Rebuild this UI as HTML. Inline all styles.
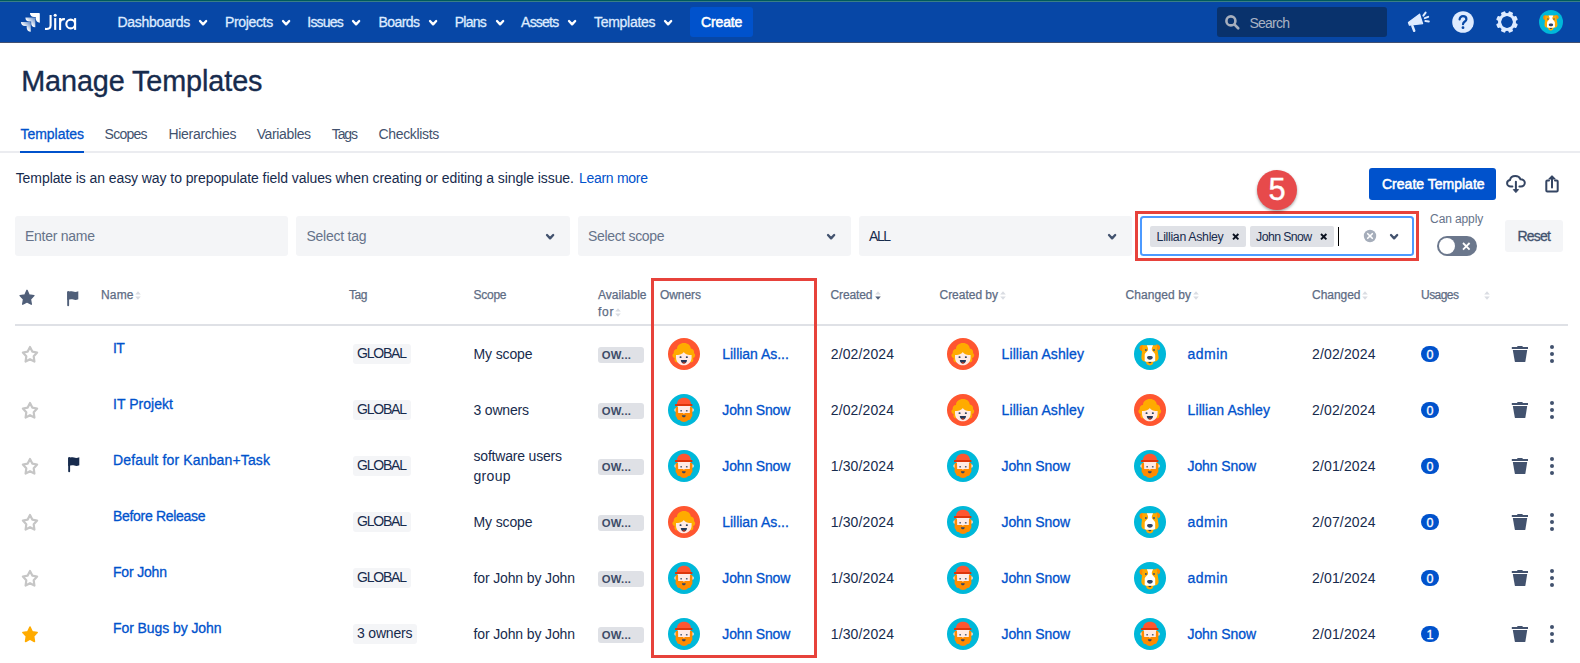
<!DOCTYPE html>
<html><head><meta charset="utf-8"><title>Manage Templates</title>
<style>
html,body{margin:0;padding:0;background:#fff;}
body{width:1580px;height:663px;position:relative;overflow:hidden;font-family:"Liberation Sans",sans-serif;}
.t{position:absolute;white-space:nowrap;line-height:20px;height:20px;}
.b{position:absolute;box-sizing:border-box;}
svg{overflow:visible;}
</style></head><body>
<div class="b" style="left:0px;top:0px;width:1580px;height:42px;background:#0747A6;"></div>
<div class="b" style="left:0px;top:0px;width:1580px;height:1px;background:#005A5E;"></div>
<div class="b" style="left:0px;top:1px;width:1580px;height:1px;background:#3A7F85;"></div>
<div class="b" style="left:0px;top:42px;width:1580px;height:1px;background:#2E3D61;opacity:.9"></div>
<div class="t" style="left:117.50px;top:12.15px;font-size:14px;color:#DEEBFF;letter-spacing:-0.310px;-webkit-text-stroke:0.3px #DEEBFF;">Dashboards</div>
<svg class="b" style="left:199.1px;top:19.8px;" width="8.2" height="5.4" viewBox="0 0 8.2 5.4"><path d="M1 1 L4.1 4.4 L7.2 1" fill="none" stroke="#fff" stroke-width="2.3" stroke-linecap="round" stroke-linejoin="round"/></svg>
<div class="t" style="left:224.90px;top:12.15px;font-size:14px;color:#DEEBFF;letter-spacing:-0.325px;-webkit-text-stroke:0.3px #DEEBFF;">Projects</div>
<svg class="b" style="left:281.9px;top:19.8px;" width="8.2" height="5.4" viewBox="0 0 8.2 5.4"><path d="M1 1 L4.1 4.4 L7.2 1" fill="none" stroke="#fff" stroke-width="2.3" stroke-linecap="round" stroke-linejoin="round"/></svg>
<div class="t" style="left:307.30px;top:12.15px;font-size:14px;color:#DEEBFF;letter-spacing:-0.792px;-webkit-text-stroke:0.3px #DEEBFF;">Issues</div>
<svg class="b" style="left:352.29999999999995px;top:19.8px;" width="8.2" height="5.4" viewBox="0 0 8.2 5.4"><path d="M1 1 L4.1 4.4 L7.2 1" fill="none" stroke="#fff" stroke-width="2.3" stroke-linecap="round" stroke-linejoin="round"/></svg>
<div class="t" style="left:378.40px;top:12.15px;font-size:14px;color:#DEEBFF;letter-spacing:-0.532px;-webkit-text-stroke:0.3px #DEEBFF;">Boards</div>
<svg class="b" style="left:428.9px;top:19.8px;" width="8.2" height="5.4" viewBox="0 0 8.2 5.4"><path d="M1 1 L4.1 4.4 L7.2 1" fill="none" stroke="#fff" stroke-width="2.3" stroke-linecap="round" stroke-linejoin="round"/></svg>
<div class="t" style="left:454.80px;top:12.15px;font-size:14px;color:#DEEBFF;letter-spacing:-0.780px;-webkit-text-stroke:0.3px #DEEBFF;">Plans</div>
<svg class="b" style="left:495.5px;top:19.8px;" width="8.2" height="5.4" viewBox="0 0 8.2 5.4"><path d="M1 1 L4.1 4.4 L7.2 1" fill="none" stroke="#fff" stroke-width="2.3" stroke-linecap="round" stroke-linejoin="round"/></svg>
<div class="t" style="left:521.10px;top:12.15px;font-size:14px;color:#DEEBFF;letter-spacing:-0.783px;-webkit-text-stroke:0.3px #DEEBFF;">Assets</div>
<svg class="b" style="left:568.0px;top:19.8px;" width="8.2" height="5.4" viewBox="0 0 8.2 5.4"><path d="M1 1 L4.1 4.4 L7.2 1" fill="none" stroke="#fff" stroke-width="2.3" stroke-linecap="round" stroke-linejoin="round"/></svg>
<div class="t" style="left:594.00px;top:12.15px;font-size:14px;color:#DEEBFF;letter-spacing:-0.289px;-webkit-text-stroke:0.3px #DEEBFF;">Templates</div>
<svg class="b" style="left:664.4px;top:19.8px;" width="8.2" height="5.4" viewBox="0 0 8.2 5.4"><path d="M1 1 L4.1 4.4 L7.2 1" fill="none" stroke="#fff" stroke-width="2.3" stroke-linecap="round" stroke-linejoin="round"/></svg>
<div class="b" style="left:690px;top:7px;width:63px;height:30px;background:#0052CC;border-radius:3px;"></div>
<div class="t" style="left:701.10px;top:12.15px;font-size:14px;color:#FFFFFF;letter-spacing:-0.164px;-webkit-text-stroke:0.55px #fff;">Create</div>
<svg width="0" height="0" style="position:absolute"><defs>
<linearGradient id="jg" x1="0.95" y1="0.1" x2="0.45" y2="0.62"><stop offset="0.1" stop-color="#fff" stop-opacity="0.45"/><stop offset="1" stop-color="#fff"/></linearGradient>
<symbol id="av-l" viewBox="0 0 32 32"><circle cx="16" cy="16" r="16" fill="#FF5630"/>
<path d="M9 24.3 C6.5 24.5 6 21.5 6.8 20 C4 19.5 3.8 16.3 5.8 15.3 C5.3 12.5 7.5 11 9 11 C9 7.5 12 5 16 5 C20 5 22.6 7.3 22.8 10.6 C25 10.8 26.6 12.8 26 15.2 C27.8 16.2 27.6 19.3 25 20 C25.8 22 25.2 24.4 22.8 24.3 Z" fill="#FFAB00"/>
<path d="M8 17 C10.5 17 14.3 16.5 15.7 13.9 C17 16.4 20.5 17 23.6 17 L23.6 19.5 C23.6 24 20.3 27.3 15.8 27.3 C11.3 27.3 8 24 8 19.5 Z" fill="#FFEBE6"/>
<rect x="11.6" y="18.2" width="1.9" height="1.9" rx=".6" fill="#344563"/><rect x="17.9" y="18.2" width="1.9" height="1.9" rx=".6" fill="#344563"/>
<path d="M12.8 22 H19 C19 24.2 17.6 25.6 15.9 25.6 C14.2 25.6 12.8 24.2 12.8 22 Z" fill="#253858"/>
<path d="M14.3 24.9 C14.8 24 17 24 17.5 24.9 C17 25.4 16.5 25.6 15.9 25.6 C15.3 25.6 14.8 25.4 14.3 24.9 Z" fill="#DE350B"/></symbol>
<symbol id="av-j" viewBox="0 0 32 32"><circle cx="16" cy="16" r="16" fill="#00B8D9"/>
<ellipse cx="7.6" cy="16" rx="1.2" ry="1.7" fill="#FFEBE6"/><ellipse cx="24.6" cy="16" rx="1.2" ry="1.7" fill="#FFEBE6"/>
<rect x="9.4" y="11" width="13.2" height="9" fill="#FFEBE6"/>
<path d="M7.7 13.2 L10 12.6 L10.2 18.9 L14.8 18.9 L15.9 19.8 L17 18.9 L21.8 18.9 L22 12.6 L24.3 13.2 C24.5 15 24.6 17.5 24.3 19.6 C24.8 21.6 24 22.8 23.2 23.4 C23 25.2 21.6 26 20.2 26 C19.4 27.4 17.4 27.7 16 28.1 C14.5 27.7 12.6 27.4 11.8 26 C10.4 26 9 25.2 8.8 23.4 C8 22.8 7.2 21.6 7.7 19.6 C7.4 17.5 7.5 15 7.7 13.2 Z" fill="#FF8B00"/>
<path d="M8.9 10.3 C8.9 6.3 12 3.7 16 3.7 C20 3.7 23 6.3 23 10.3 Z" fill="#FF5630"/>
<rect x="7" y="10.1" width="17.4" height="1.8" rx=".5" fill="#DE350B"/>
<rect x="12.3" y="15.9" width="1.7" height="1.7" rx=".5" fill="#505F79"/><rect x="17.9" y="15.9" width="1.7" height="1.7" rx=".5" fill="#505F79"/>
<path d="M13.9 21.2 H17.7 C17.7 22.6 16.9 23.3 15.8 23.3 C14.7 23.3 13.9 22.6 13.9 21.2 Z" fill="#344563"/></symbol>
<symbol id="av-d" viewBox="0 0 32 32"><circle cx="16" cy="16" r="16" fill="#00B8D9"/>
<path d="M9.5 7.3 C7 6.5 5.2 8 5.6 10.5 C5.8 12 6.8 13 8.3 13.3 Z" fill="#FF8B00"/>
<path d="M21.8 6.8 C24 5.9 26.3 7.3 26.2 9.8 C26.1 11.2 25.2 12 24 12.2 Z" fill="#FF8B00"/>
<path d="M8.6 7.2 H22.8 L24.6 19 C24.8 21 24 22.5 22.3 23.2 L19.4 23.8 C19.4 26 18 27.4 15.8 27.4 C13.6 27.4 12 26 12 23.8 L9.5 23.2 C8 22.6 7.2 21 7.4 19 Z" fill="#FFAB00"/>
<path d="M12.8 7.2 H19.1 C18.6 8.8 17.7 9.8 17.8 11.4 C18 13.6 21.2 14.4 21.2 17 V23 L19 23.8 H12.3 L10.7 23 V17 C10.7 14.4 13.9 13.6 14.1 11.4 C14.2 9.8 13.3 8.8 12.8 7.2 Z" fill="#fff"/>
<rect x="11" y="11" width="1.8" height="1.9" rx=".7" fill="#42526E"/><rect x="19.1" y="11" width="1.8" height="1.9" rx=".7" fill="#42526E"/>
<path d="M13 19.6 C13 18.4 14.4 18.1 15.9 18.1 C17.4 18.1 18.8 18.4 18.8 19.6 C18.8 20.8 17.4 21.8 15.9 21.8 C14.4 21.8 13 20.8 13 19.6 Z" fill="#344563"/>
<path d="M14.4 23.9 H17.3 C17.3 24.8 16.7 25.2 15.85 25.2 C15 25.2 14.4 24.8 14.4 23.9 Z" fill="#344563"/></symbol>
</defs></svg>
<svg class="b" style="left:19.2px;top:11.1px;" width="22.7" height="22.7" viewBox="0 0 24 24"><path d="M11.53 2c0 2.4 1.97 4.35 4.35 4.35h1.78v1.7c0 2.4 1.94 4.34 4.34 4.35V2.84a.84.84 0 0 0-.84-.84h-9.63z" fill="#fff"/>
<path d="M6.77 6.8a4.36 4.36 0 0 0 4.34 4.34h1.8v1.72a4.36 4.36 0 0 0 4.34 4.34V7.63a.84.84 0 0 0-.83-.83H6.77z" fill="url(#jg)"/>
<path d="M2 11.6c0 2.4 1.95 4.34 4.35 4.34h1.78v1.72c.01 2.39 1.95 4.34 4.34 4.34v-9.57a.84.84 0 0 0-.84-.84H2z" fill="url(#jg)"/></svg>
<svg class="b" style="left:42px;top:10px;" width="40" height="24" viewBox="0 0 40 24"><g fill="none" stroke="#fff" stroke-width="2.1" stroke-linejoin="round">
<path d="M8.6 4.9 V15.6 C8.6 18.4 6.6 19.3 3 18.9"/>
<path d="M13.2 8.1 V19.9"/>
<path d="M18.1 8.1 V19.9 M18.1 13.5 C18.1 10.4 20 8.9 22.9 9.2"/>
<circle cx="28.7" cy="14" r="4.4"/><path d="M33.1 8.1 V19.9"/></g>
<circle cx="13.2" cy="5.3" r="1.55" fill="#fff"/></svg>
<div class="b" style="left:1217px;top:7px;width:170px;height:30px;background:#09326C;border-radius:3px;"></div>
<svg class="b" style="left:1223px;top:13px;" width="18" height="18" viewBox="0 0 18 18"><circle cx="7.9" cy="7.9" r="4.5" fill="none" stroke="#A7AFBD" stroke-width="2.6"/><path d="M11.6 11.6 L15.2 15.2" stroke="#A7AFBD" stroke-width="2.7" stroke-linecap="round"/></svg>
<div class="t" style="left:1249.40px;top:12.75px;font-size:14px;color:#A9B2C3;letter-spacing:-0.732px;">Search</div>
<svg class="b" style="left:1406px;top:10px;" width="26" height="24" viewBox="0 0 26 24"><path d="M2.4 12.4 L13.6 4.2 L16.6 13.6 L3.4 15.2 Z" fill="#DEEBFF" stroke="#DEEBFF" stroke-width="1.2" stroke-linejoin="round"/>
<path d="M6.4 16 L8.2 20.8" stroke="#DEEBFF" stroke-width="2.5" stroke-linecap="round"/>
<path d="M17.4 5.6 L19.6 2.6 M18.8 8.2 L22.2 6.8 M19.4 11 L22.8 11.4" stroke="#DEEBFF" stroke-width="2" stroke-linecap="round"/></svg>
<svg class="b" style="left:1452px;top:10.6px;" width="22" height="22" viewBox="0 0 22 22"><circle cx="11" cy="11" r="10.8" fill="#DEEBFF"/>
<path d="M7.6 8.4 C7.6 6.4 9.2 5.2 11 5.2 C12.8 5.2 14.4 6.4 14.4 8.2 C14.4 10.6 11 10.4 11 13.2" fill="none" stroke="#0747A6" stroke-width="2.2" stroke-linecap="round"/><circle cx="11" cy="16.7" r="1.4" fill="#0747A6"/></svg>
<svg class="b" style="left:1495.8px;top:10.6px;" width="22" height="22" viewBox="0 0 22 22"><g transform="translate(11,11)"><rect x="-2.3" y="-10.9" width="4.6" height="5" rx="1" transform="rotate(22.5)" fill="#DEEBFF"/><rect x="-2.3" y="-10.9" width="4.6" height="5" rx="1" transform="rotate(67.5)" fill="#DEEBFF"/><rect x="-2.3" y="-10.9" width="4.6" height="5" rx="1" transform="rotate(112.5)" fill="#DEEBFF"/><rect x="-2.3" y="-10.9" width="4.6" height="5" rx="1" transform="rotate(157.5)" fill="#DEEBFF"/><rect x="-2.3" y="-10.9" width="4.6" height="5" rx="1" transform="rotate(202.5)" fill="#DEEBFF"/><rect x="-2.3" y="-10.9" width="4.6" height="5" rx="1" transform="rotate(247.5)" fill="#DEEBFF"/><rect x="-2.3" y="-10.9" width="4.6" height="5" rx="1" transform="rotate(292.5)" fill="#DEEBFF"/><rect x="-2.3" y="-10.9" width="4.6" height="5" rx="1" transform="rotate(337.5)" fill="#DEEBFF"/><circle r="7.45" fill="none" stroke="#DEEBFF" stroke-width="3.1"/></g></svg>
<svg class="b" style="left:1539px;top:9.600000000000001px" width="24" height="24"><use href="#av-d"/></svg>
<div class="t" style="left:21.20px;top:70.62px;font-size:28.8px;color:#172B4D;letter-spacing:-0.102px;line-height:36px;height:36px;margin-top:-8px;-webkit-text-stroke:0.35px #172B4D;">Manage Templates</div>
<div class="b" style="left:0px;top:151px;width:1580px;height:2px;background:#EBECF0;"></div>
<div class="b" style="left:20px;top:151px;width:64px;height:2px;background:#0052CC;"></div>
<div class="t" style="left:20.50px;top:124.35px;font-size:14px;color:#0052CC;letter-spacing:-0.039px;-webkit-text-stroke:0.3px currentColor;">Templates</div>
<div class="t" style="left:104.60px;top:124.35px;font-size:14px;color:#42526E;letter-spacing:-0.740px;">Scopes</div>
<div class="t" style="left:168.40px;top:124.35px;font-size:14px;color:#42526E;letter-spacing:-0.280px;">Hierarchies</div>
<div class="t" style="left:256.70px;top:124.35px;font-size:14px;color:#42526E;letter-spacing:-0.366px;">Variables</div>
<div class="t" style="left:331.80px;top:124.35px;font-size:14px;color:#42526E;letter-spacing:-1.124px;">Tags</div>
<div class="t" style="left:378.60px;top:124.35px;font-size:14px;color:#42526E;letter-spacing:-0.355px;">Checklists</div>
<div class="t" style="left:15.70px;top:168.35px;font-size:14px;color:#172B4D;letter-spacing:-0.074px;">Template is an easy way to prepopulate field values when creating or editing a single issue.</div>
<div class="t" style="left:579.00px;top:168.35px;font-size:14px;color:#0052CC;letter-spacing:-0.288px;">Learn more</div>
<div class="b" style="left:1369px;top:168px;width:127px;height:32px;background:#0052CC;border-radius:3px;"></div>
<div class="t" style="left:1382.00px;top:174.15px;font-size:14px;color:#fff;letter-spacing:0.010px;-webkit-text-stroke:0.55px #fff;">Create Template</div>
<svg class="b" style="left:1505px;top:173px;" width="22" height="22" viewBox="0 0 22 22"><path d="M7.4 13.4 H5.8 C3.7 13.4 2.1 12 2.1 10.2 C2.1 8.6 3.3 7.3 5 7 C5.4 4.6 7.6 3.1 10.3 3.1 C12.7 3.1 14.6 4.3 15.4 6.2 C17.9 6.2 19.8 7.7 19.8 9.8 C19.8 11.9 18.1 13.4 15.9 13.4 H14.4" fill="none" stroke="#344563" stroke-width="2" stroke-linecap="round"/>
<path d="M10.9 8.8 V17.6" fill="none" stroke="#344563" stroke-width="2" stroke-linecap="round"/><path d="M8.3 16.6 H13.5 L10.9 19.6 Z" fill="#344563" stroke="#344563" stroke-width="1" stroke-linejoin="round"/></svg>
<svg class="b" style="left:1542px;top:173px;" width="20" height="22" viewBox="0 0 20 22"><path d="M7 7.4 H5.3 C4.7 7.4 4.3 7.8 4.3 8.4 V17.6 C4.3 18.2 4.7 18.6 5.3 18.6 H14.7 C15.3 18.6 15.7 18.2 15.7 17.6 V8.4 C15.7 7.8 15.3 7.4 14.7 7.4 H13" fill="none" stroke="#344563" stroke-width="2" stroke-linecap="round"/>
<path d="M10 14.6 V4" fill="none" stroke="#344563" stroke-width="2" stroke-linecap="round"/><path d="M7 6 L10 2.9 L13 6 Z" fill="#344563" stroke="#344563" stroke-width="1.2" stroke-linejoin="round"/></svg>
<div class="b" style="left:15px;top:216px;width:273px;height:40px;background:#F4F5F7;border-radius:3px;"></div>
<div class="t" style="left:25.00px;top:226.15px;font-size:14px;color:#66738A;letter-spacing:-0.264px;">Enter name</div>
<div class="b" style="left:296px;top:216px;width:274px;height:40px;background:#F4F5F7;border-radius:3px;"></div>
<div class="t" style="left:306.50px;top:226.15px;font-size:14px;color:#66738A;letter-spacing:-0.251px;">Select tag</div>
<svg class="b" style="left:545.9px;top:233.70000000000002px;" width="8.2" height="5.4" viewBox="0 0 8.2 5.4"><path d="M1 1 L4.1 4.4 L7.2 1" fill="none" stroke="#42526E" stroke-width="2.3" stroke-linecap="round" stroke-linejoin="round"/></svg>
<div class="b" style="left:578px;top:216px;width:273px;height:40px;background:#F4F5F7;border-radius:3px;"></div>
<div class="t" style="left:588.00px;top:226.15px;font-size:14px;color:#66738A;letter-spacing:-0.333px;">Select scope</div>
<svg class="b" style="left:826.9px;top:233.70000000000002px;" width="8.2" height="5.4" viewBox="0 0 8.2 5.4"><path d="M1 1 L4.1 4.4 L7.2 1" fill="none" stroke="#42526E" stroke-width="2.3" stroke-linecap="round" stroke-linejoin="round"/></svg>
<div class="b" style="left:859px;top:216px;width:273px;height:40px;background:#F4F5F7;border-radius:3px;"></div>
<div class="t" style="left:869.00px;top:226.15px;font-size:14px;color:#172B4D;letter-spacing:-1.456px;">ALL</div>
<svg class="b" style="left:1107.9px;top:233.70000000000002px;" width="8.2" height="5.4" viewBox="0 0 8.2 5.4"><path d="M1 1 L4.1 4.4 L7.2 1" fill="none" stroke="#42526E" stroke-width="2.3" stroke-linecap="round" stroke-linejoin="round"/></svg>
<div class="b" style="left:1135px;top:211px;width:284px;height:50px;background:transparent;border:3px solid #E7423B;"></div>
<div class="b" style="left:1140px;top:216px;width:274px;height:40px;background:#fff;border:2px solid #4C9AFF;border-radius:3.5px;"></div>
<div class="b" style="left:1150px;top:226px;width:95.7px;height:20.6px;background:#DFE1E6;border-radius:2px;"></div>
<div class="t" style="left:1156.60px;top:226.74px;font-size:12.3px;color:#172B4D;letter-spacing:-0.301px;">Lillian Ashley</div>
<svg class="b" style="left:1232.2px;top:232.60000000000002px;" width="7.4" height="7.4" viewBox="0 0 7.4 7.4"><path d="M1 1 L6.4 6.4 M6.4 1 L1 6.4" stroke="#0B1220" stroke-width="1.9" stroke-linecap="butt"/></svg>
<div class="b" style="left:1250px;top:226px;width:83.8px;height:20.6px;background:#DFE1E6;border-radius:2px;"></div>
<div class="t" style="left:1256.10px;top:226.74px;font-size:12.3px;color:#172B4D;letter-spacing:-0.595px;">John Snow</div>
<svg class="b" style="left:1320.1px;top:232.60000000000002px;" width="7.4" height="7.4" viewBox="0 0 7.4 7.4"><path d="M1 1 L6.4 6.4 M6.4 1 L1 6.4" stroke="#0B1220" stroke-width="1.9" stroke-linecap="butt"/></svg>
<div class="b" style="left:1338px;top:227.2px;width:1px;height:18.6px;background:#000;"></div>
<svg class="b" style="left:1362.5px;top:229.3px;" width="14" height="14" viewBox="0 0 14 14"><circle cx="7" cy="7" r="6.2" fill="#A5ADBA"/><path d="M4.7 4.7 L9.3 9.3 M9.3 4.7 L4.7 9.3" stroke="#fff" stroke-width="1.6" stroke-linecap="round"/></svg>
<svg class="b" style="left:1389.9px;top:233.70000000000002px;" width="8.2" height="5.4" viewBox="0 0 8.2 5.4"><path d="M1 1 L4.1 4.4 L7.2 1" fill="none" stroke="#42526E" stroke-width="2.3" stroke-linecap="round" stroke-linejoin="round"/></svg>
<div class="t" style="left:1430.10px;top:208.64px;font-size:12px;color:#66738A;letter-spacing:-0.117px;">Can apply</div>
<div class="b" style="left:1437px;top:236px;width:40px;height:20px;background:#6B778C;border-radius:10px;"></div>
<div class="b" style="left:1439px;top:238px;width:16px;height:16px;background:#fff;border-radius:8px;"></div>
<svg class="b" style="left:1461.7px;top:241.7px;" width="8.6" height="8.6" viewBox="0 0 8.6 8.6"><path d="M1 1 L7.6 7.6 M7.6 1 L1 7.6" stroke="#fff" stroke-width="1.8" stroke-linecap="butt"/></svg>
<div class="b" style="left:1505px;top:220px;width:58px;height:32px;background:#F4F5F7;border-radius:3px;"></div>
<div class="t" style="left:1517.50px;top:226.45px;font-size:14px;color:#42526E;letter-spacing:-0.768px;-webkit-text-stroke:0.3px currentColor;">Reset</div>
<div class="b" style="left:1257px;top:170px;width:40px;height:40px;background:#E74A4B;border-radius:20px;box-shadow:0 1.5px 3px rgba(0,0,0,.35);"></div>
<div class="t" style="left:1268.40px;top:180.32px;font-size:30.8px;color:#fff;letter-spacing:0.000px;line-height:36px;height:36px;margin-top:-8px;-webkit-text-stroke:0.4px #fff;">5</div>
<svg class="b" style="left:17px;top:288.3px;" width="20" height="20" viewBox="0 0 20 20"><path d="M0.00 -7.67 L2.12 -3.06 L6.94 -2.37 L3.42 1.17 L4.29 6.20 L0.00 3.78 L-4.29 6.20 L-3.42 1.17 L-6.94 -2.37 L-2.12 -3.06 Z" transform="translate(10,10)" fill="#505F79" stroke="#505F79" stroke-width="1.4" stroke-linejoin="round"/></svg>
<svg class="b" style="left:67.3px;top:291px;" width="13" height="15" viewBox="0 0 13 15"><path d="M1.15 0.9 V14.3" stroke="#505F79" stroke-width="1.9" stroke-linecap="round"/><path d="M0.2 0.9 C2.5 -0.1 4.5 0.2 6 0.6 C8 1.1 9.6 0.9 11.3 0.3 V8.3 C9.6 9 8 9.1 6.4 8.6 C4.8 8.1 3 8.1 0.2 8.9 Z" fill="#505F79"/></svg>
<div class="t" style="left:101.00px;top:284.84px;font-size:12px;color:#5E6C84;letter-spacing:0.163px;-webkit-text-stroke:0.25px #5E6C84;">Name</div>
<svg class="b" style="left:134.9px;top:291.3px;" width="6" height="9" viewBox="0 0 6 9"><path d="M3 0.2 L5.8 3.5 H0.2 Z" fill="#D9DCE2"/><path d="M3 8.8 L5.8 5.5 H0.2 Z" fill="#D9DCE2"/></svg>
<div class="t" style="left:349.00px;top:284.84px;font-size:12px;color:#5E6C84;letter-spacing:-0.424px;-webkit-text-stroke:0.25px #5E6C84;">Tag</div>
<div class="t" style="left:473.50px;top:284.84px;font-size:12px;color:#5E6C84;letter-spacing:-0.257px;-webkit-text-stroke:0.25px #5E6C84;">Scope</div>
<div class="t" style="left:598.00px;top:284.84px;font-size:12px;color:#5E6C84;letter-spacing:0.002px;-webkit-text-stroke:0.25px #5E6C84;">Available</div>
<div class="t" style="left:660.00px;top:284.84px;font-size:12px;color:#5E6C84;letter-spacing:-0.069px;-webkit-text-stroke:0.25px #5E6C84;">Owners</div>
<div class="t" style="left:830.50px;top:284.84px;font-size:12px;color:#5E6C84;letter-spacing:-0.115px;-webkit-text-stroke:0.25px #5E6C84;">Created</div>
<svg class="b" style="left:875px;top:291.0px;" width="6" height="9" viewBox="0 0 6 9"><path d="M3 0.2 L5.8 3.5 H0.2 Z" fill="#DADDE3"/><path d="M3 8.8 L5.8 5.5 H0.2 Z" fill="#505F79"/></svg>
<div class="t" style="left:939.50px;top:284.84px;font-size:12px;color:#5E6C84;letter-spacing:-0.022px;-webkit-text-stroke:0.25px #5E6C84;">Created by</div>
<svg class="b" style="left:1000px;top:291.3px;" width="6" height="9" viewBox="0 0 6 9"><path d="M3 0.2 L5.8 3.5 H0.2 Z" fill="#D9DCE2"/><path d="M3 8.8 L5.8 5.5 H0.2 Z" fill="#D9DCE2"/></svg>
<div class="t" style="left:1125.50px;top:284.84px;font-size:12px;color:#5E6C84;letter-spacing:0.087px;-webkit-text-stroke:0.25px #5E6C84;">Changed by</div>
<svg class="b" style="left:1193px;top:291.3px;" width="6" height="9" viewBox="0 0 6 9"><path d="M3 0.2 L5.8 3.5 H0.2 Z" fill="#D9DCE2"/><path d="M3 8.8 L5.8 5.5 H0.2 Z" fill="#D9DCE2"/></svg>
<div class="t" style="left:1312.00px;top:284.84px;font-size:12px;color:#5E6C84;letter-spacing:-0.035px;-webkit-text-stroke:0.25px #5E6C84;">Changed</div>
<svg class="b" style="left:1362px;top:291.3px;" width="6" height="9" viewBox="0 0 6 9"><path d="M3 0.2 L5.8 3.5 H0.2 Z" fill="#D9DCE2"/><path d="M3 8.8 L5.8 5.5 H0.2 Z" fill="#D9DCE2"/></svg>
<div class="t" style="left:1421.00px;top:284.84px;font-size:12px;color:#5E6C84;letter-spacing:-0.538px;-webkit-text-stroke:0.25px #5E6C84;">Usages</div>
<svg class="b" style="left:1484px;top:291.3px;" width="6" height="9" viewBox="0 0 6 9"><path d="M3 0.2 L5.8 3.5 H0.2 Z" fill="#D9DCE2"/><path d="M3 8.8 L5.8 5.5 H0.2 Z" fill="#D9DCE2"/></svg>
<div class="t" style="left:598.00px;top:302.34px;font-size:12px;color:#5E6C84;letter-spacing:0.748px;-webkit-text-stroke:0.25px #5E6C84;">for</div>
<svg class="b" style="left:615px;top:307.5px;" width="6" height="9" viewBox="0 0 6 9"><path d="M3 0.2 L5.8 3.5 H0.2 Z" fill="#D9DCE2"/><path d="M3 8.8 L5.8 5.5 H0.2 Z" fill="#D9DCE2"/></svg>
<div class="b" style="left:15px;top:324px;width:1553px;height:2px;background:#DFE1E6;"></div>
<svg class="b" style="left:19.9px;top:345.1px;" width="20" height="20" viewBox="0 0 20 20"><path d="M0.00 -8.10 L2.29 -3.41 L7.13 -2.50 L3.71 1.30 L4.41 6.55 L0.00 4.21 L-4.41 6.55 L-3.71 1.30 L-7.13 -2.50 L-2.29 -3.41 Z" transform="translate(10,10)" fill="none" stroke="#C6C6C6" stroke-width="2.2" stroke-linejoin="round"/></svg>
<div class="t" style="left:113.00px;top:338.15px;font-size:14px;color:#0052CC;letter-spacing:-0.641px;-webkit-text-stroke:0.3px #0052CC;">IT</div>
<div class="b" style="left:353px;top:344px;width:58px;height:20px;background:#F4F5F7;border-radius:3px;"></div>
<div class="t" style="left:357.00px;top:343.15px;font-size:14px;color:#172B4D;letter-spacing:-1.206px;">GLOBAL</div>
<div class="t" style="left:473.50px;top:344.15px;font-size:14px;color:#172B4D;letter-spacing:-0.130px;">My scope</div>
<div class="b" style="left:598px;top:347px;width:46px;height:16px;background:#DFE1E6;border-radius:3px;"></div>
<div class="t" style="left:601.80px;top:345.08px;font-size:11.3px;color:#3D4C68;letter-spacing:0.238px;font-weight:700;">OW...</div>
<svg class="b" style="left:668px;top:338px" width="32" height="32"><use href="#av-l"/></svg>
<div class="t" style="left:722.30px;top:344.15px;font-size:14px;color:#0052CC;letter-spacing:-0.035px;-webkit-text-stroke:0.3px #0052CC;">Lillian As...</div>
<div class="t" style="left:830.80px;top:344.15px;font-size:14px;color:#172B4D;letter-spacing:0.115px;">2/02/2024</div>
<svg class="b" style="left:947px;top:338px" width="32" height="32"><use href="#av-l"/></svg>
<div class="t" style="left:1001.50px;top:344.15px;font-size:14px;color:#0052CC;letter-spacing:0.120px;-webkit-text-stroke:0.3px #0052CC;">Lillian Ashley</div>
<svg class="b" style="left:1134px;top:338px" width="32" height="32"><use href="#av-d"/></svg>
<div class="t" style="left:1187.50px;top:344.15px;font-size:14px;color:#0052CC;letter-spacing:0.467px;-webkit-text-stroke:0.3px #0052CC;">admin</div>
<div class="t" style="left:1312.00px;top:344.15px;font-size:14px;color:#172B4D;letter-spacing:0.152px;">2/02/2024</div>
<div class="b" style="left:1421px;top:346px;width:18px;height:16px;background:#0052CC;border-radius:8px;"></div>
<div class="t" style="left:1426.50px;top:344.67px;font-size:12.5px;color:#fff;letter-spacing:0.000px;-webkit-text-stroke:0.3px #fff;">0</div>
<svg class="b" style="left:1511px;top:344px;" width="18" height="19" viewBox="0 0 18 19"><path d="M0.8 3 H17 V4.9 H0.8 Z M6.3 1.9 H11.6 V3 H6.3 Z" fill="#42526E"/><path d="M1.8 6 H16.2 L14.4 17.4 C14.3 17.8 14 18 13.6 18 H4.6 C4.2 18 3.9 17.8 3.8 17.4 Z" fill="#42526E"/></svg>
<div class="b" style="left:1550px;top:345px;width:4px;height:4px;background:#42526E;border-radius:2px;"></div>
<div class="b" style="left:1550px;top:352px;width:4px;height:4px;background:#42526E;border-radius:2px;"></div>
<div class="b" style="left:1550px;top:359px;width:4px;height:4px;background:#42526E;border-radius:2px;"></div>
<svg class="b" style="left:19.9px;top:401.1px;" width="20" height="20" viewBox="0 0 20 20"><path d="M0.00 -8.10 L2.29 -3.41 L7.13 -2.50 L3.71 1.30 L4.41 6.55 L0.00 4.21 L-4.41 6.55 L-3.71 1.30 L-7.13 -2.50 L-2.29 -3.41 Z" transform="translate(10,10)" fill="none" stroke="#C6C6C6" stroke-width="2.2" stroke-linejoin="round"/></svg>
<div class="t" style="left:113.00px;top:394.15px;font-size:14px;color:#0052CC;letter-spacing:0.039px;-webkit-text-stroke:0.3px #0052CC;">IT Projekt</div>
<div class="b" style="left:353px;top:400px;width:58px;height:20px;background:#F4F5F7;border-radius:3px;"></div>
<div class="t" style="left:357.00px;top:399.15px;font-size:14px;color:#172B4D;letter-spacing:-1.206px;">GLOBAL</div>
<div class="t" style="left:473.50px;top:400.15px;font-size:14px;color:#172B4D;letter-spacing:-0.187px;">3 owners</div>
<div class="b" style="left:598px;top:403px;width:46px;height:16px;background:#DFE1E6;border-radius:3px;"></div>
<div class="t" style="left:601.80px;top:401.08px;font-size:11.3px;color:#3D4C68;letter-spacing:0.238px;font-weight:700;">OW...</div>
<svg class="b" style="left:668px;top:394px" width="32" height="32"><use href="#av-j"/></svg>
<div class="t" style="left:722.30px;top:400.15px;font-size:14px;color:#0052CC;letter-spacing:-0.159px;-webkit-text-stroke:0.3px #0052CC;">John Snow</div>
<div class="t" style="left:830.80px;top:400.15px;font-size:14px;color:#172B4D;letter-spacing:0.115px;">2/02/2024</div>
<svg class="b" style="left:947px;top:394px" width="32" height="32"><use href="#av-l"/></svg>
<div class="t" style="left:1001.50px;top:400.15px;font-size:14px;color:#0052CC;letter-spacing:0.120px;-webkit-text-stroke:0.3px #0052CC;">Lillian Ashley</div>
<svg class="b" style="left:1134px;top:394px" width="32" height="32"><use href="#av-l"/></svg>
<div class="t" style="left:1187.50px;top:400.15px;font-size:14px;color:#0052CC;letter-spacing:0.120px;-webkit-text-stroke:0.3px #0052CC;">Lillian Ashley</div>
<div class="t" style="left:1312.00px;top:400.15px;font-size:14px;color:#172B4D;letter-spacing:0.152px;">2/02/2024</div>
<div class="b" style="left:1421px;top:402px;width:18px;height:16px;background:#0052CC;border-radius:8px;"></div>
<div class="t" style="left:1426.50px;top:400.67px;font-size:12.5px;color:#fff;letter-spacing:0.000px;-webkit-text-stroke:0.3px #fff;">0</div>
<svg class="b" style="left:1511px;top:400px;" width="18" height="19" viewBox="0 0 18 19"><path d="M0.8 3 H17 V4.9 H0.8 Z M6.3 1.9 H11.6 V3 H6.3 Z" fill="#42526E"/><path d="M1.8 6 H16.2 L14.4 17.4 C14.3 17.8 14 18 13.6 18 H4.6 C4.2 18 3.9 17.8 3.8 17.4 Z" fill="#42526E"/></svg>
<div class="b" style="left:1550px;top:401px;width:4px;height:4px;background:#42526E;border-radius:2px;"></div>
<div class="b" style="left:1550px;top:408px;width:4px;height:4px;background:#42526E;border-radius:2px;"></div>
<div class="b" style="left:1550px;top:415px;width:4px;height:4px;background:#42526E;border-radius:2px;"></div>
<svg class="b" style="left:19.9px;top:457.1px;" width="20" height="20" viewBox="0 0 20 20"><path d="M0.00 -8.10 L2.29 -3.41 L7.13 -2.50 L3.71 1.30 L4.41 6.55 L0.00 4.21 L-4.41 6.55 L-3.71 1.30 L-7.13 -2.50 L-2.29 -3.41 Z" transform="translate(10,10)" fill="none" stroke="#C6C6C6" stroke-width="2.2" stroke-linejoin="round"/></svg>
<svg class="b" style="left:67.6px;top:457.4px;" width="13" height="15" viewBox="0 0 13 15"><path d="M1.15 0.9 V14.3" stroke="#172B4D" stroke-width="1.9" stroke-linecap="round"/><path d="M0.2 0.9 C2.5 -0.1 4.5 0.2 6 0.6 C8 1.1 9.6 0.9 11.3 0.3 V8.3 C9.6 9 8 9.1 6.4 8.6 C4.8 8.1 3 8.1 0.2 8.9 Z" fill="#172B4D"/></svg>
<div class="t" style="left:113.00px;top:450.15px;font-size:14px;color:#0052CC;letter-spacing:0.150px;-webkit-text-stroke:0.3px #0052CC;">Default for Kanban+Task</div>
<div class="b" style="left:353px;top:456px;width:58px;height:20px;background:#F4F5F7;border-radius:3px;"></div>
<div class="t" style="left:357.00px;top:455.15px;font-size:14px;color:#172B4D;letter-spacing:-1.206px;">GLOBAL</div>
<div class="t" style="left:473.50px;top:446.15px;font-size:14px;color:#172B4D;letter-spacing:-0.195px;">software users</div>
<div class="t" style="left:473.50px;top:466.15px;font-size:14px;color:#172B4D;letter-spacing:0.298px;">group</div>
<div class="b" style="left:598px;top:459px;width:46px;height:16px;background:#DFE1E6;border-radius:3px;"></div>
<div class="t" style="left:601.80px;top:457.08px;font-size:11.3px;color:#3D4C68;letter-spacing:0.238px;font-weight:700;">OW...</div>
<svg class="b" style="left:668px;top:450px" width="32" height="32"><use href="#av-j"/></svg>
<div class="t" style="left:722.30px;top:456.15px;font-size:14px;color:#0052CC;letter-spacing:-0.159px;-webkit-text-stroke:0.3px #0052CC;">John Snow</div>
<div class="t" style="left:830.80px;top:456.15px;font-size:14px;color:#172B4D;letter-spacing:0.115px;">1/30/2024</div>
<svg class="b" style="left:947px;top:450px" width="32" height="32"><use href="#av-j"/></svg>
<div class="t" style="left:1001.50px;top:456.15px;font-size:14px;color:#0052CC;letter-spacing:-0.096px;-webkit-text-stroke:0.3px #0052CC;">John Snow</div>
<svg class="b" style="left:1134px;top:450px" width="32" height="32"><use href="#av-j"/></svg>
<div class="t" style="left:1187.50px;top:456.15px;font-size:14px;color:#0052CC;letter-spacing:-0.096px;-webkit-text-stroke:0.3px #0052CC;">John Snow</div>
<div class="t" style="left:1312.00px;top:456.15px;font-size:14px;color:#172B4D;letter-spacing:0.152px;">2/01/2024</div>
<div class="b" style="left:1421px;top:458px;width:18px;height:16px;background:#0052CC;border-radius:8px;"></div>
<div class="t" style="left:1426.50px;top:456.67px;font-size:12.5px;color:#fff;letter-spacing:0.000px;-webkit-text-stroke:0.3px #fff;">0</div>
<svg class="b" style="left:1511px;top:456px;" width="18" height="19" viewBox="0 0 18 19"><path d="M0.8 3 H17 V4.9 H0.8 Z M6.3 1.9 H11.6 V3 H6.3 Z" fill="#42526E"/><path d="M1.8 6 H16.2 L14.4 17.4 C14.3 17.8 14 18 13.6 18 H4.6 C4.2 18 3.9 17.8 3.8 17.4 Z" fill="#42526E"/></svg>
<div class="b" style="left:1550px;top:457px;width:4px;height:4px;background:#42526E;border-radius:2px;"></div>
<div class="b" style="left:1550px;top:464px;width:4px;height:4px;background:#42526E;border-radius:2px;"></div>
<div class="b" style="left:1550px;top:471px;width:4px;height:4px;background:#42526E;border-radius:2px;"></div>
<svg class="b" style="left:19.9px;top:513.1px;" width="20" height="20" viewBox="0 0 20 20"><path d="M0.00 -8.10 L2.29 -3.41 L7.13 -2.50 L3.71 1.30 L4.41 6.55 L0.00 4.21 L-4.41 6.55 L-3.71 1.30 L-7.13 -2.50 L-2.29 -3.41 Z" transform="translate(10,10)" fill="none" stroke="#C6C6C6" stroke-width="2.2" stroke-linejoin="round"/></svg>
<div class="t" style="left:113.00px;top:506.15px;font-size:14px;color:#0052CC;letter-spacing:-0.308px;-webkit-text-stroke:0.3px #0052CC;">Before Release</div>
<div class="b" style="left:353px;top:512px;width:58px;height:20px;background:#F4F5F7;border-radius:3px;"></div>
<div class="t" style="left:357.00px;top:511.15px;font-size:14px;color:#172B4D;letter-spacing:-1.206px;">GLOBAL</div>
<div class="t" style="left:473.50px;top:512.15px;font-size:14px;color:#172B4D;letter-spacing:-0.130px;">My scope</div>
<div class="b" style="left:598px;top:515px;width:46px;height:16px;background:#DFE1E6;border-radius:3px;"></div>
<div class="t" style="left:601.80px;top:513.08px;font-size:11.3px;color:#3D4C68;letter-spacing:0.238px;font-weight:700;">OW...</div>
<svg class="b" style="left:668px;top:506px" width="32" height="32"><use href="#av-l"/></svg>
<div class="t" style="left:722.30px;top:512.15px;font-size:14px;color:#0052CC;letter-spacing:-0.035px;-webkit-text-stroke:0.3px #0052CC;">Lillian As...</div>
<div class="t" style="left:830.80px;top:512.15px;font-size:14px;color:#172B4D;letter-spacing:0.115px;">1/30/2024</div>
<svg class="b" style="left:947px;top:506px" width="32" height="32"><use href="#av-j"/></svg>
<div class="t" style="left:1001.50px;top:512.15px;font-size:14px;color:#0052CC;letter-spacing:-0.096px;-webkit-text-stroke:0.3px #0052CC;">John Snow</div>
<svg class="b" style="left:1134px;top:506px" width="32" height="32"><use href="#av-d"/></svg>
<div class="t" style="left:1187.50px;top:512.15px;font-size:14px;color:#0052CC;letter-spacing:0.467px;-webkit-text-stroke:0.3px #0052CC;">admin</div>
<div class="t" style="left:1312.00px;top:512.15px;font-size:14px;color:#172B4D;letter-spacing:0.152px;">2/07/2024</div>
<div class="b" style="left:1421px;top:514px;width:18px;height:16px;background:#0052CC;border-radius:8px;"></div>
<div class="t" style="left:1426.50px;top:512.67px;font-size:12.5px;color:#fff;letter-spacing:0.000px;-webkit-text-stroke:0.3px #fff;">0</div>
<svg class="b" style="left:1511px;top:512px;" width="18" height="19" viewBox="0 0 18 19"><path d="M0.8 3 H17 V4.9 H0.8 Z M6.3 1.9 H11.6 V3 H6.3 Z" fill="#42526E"/><path d="M1.8 6 H16.2 L14.4 17.4 C14.3 17.8 14 18 13.6 18 H4.6 C4.2 18 3.9 17.8 3.8 17.4 Z" fill="#42526E"/></svg>
<div class="b" style="left:1550px;top:513px;width:4px;height:4px;background:#42526E;border-radius:2px;"></div>
<div class="b" style="left:1550px;top:520px;width:4px;height:4px;background:#42526E;border-radius:2px;"></div>
<div class="b" style="left:1550px;top:527px;width:4px;height:4px;background:#42526E;border-radius:2px;"></div>
<svg class="b" style="left:19.9px;top:569.1px;" width="20" height="20" viewBox="0 0 20 20"><path d="M0.00 -8.10 L2.29 -3.41 L7.13 -2.50 L3.71 1.30 L4.41 6.55 L0.00 4.21 L-4.41 6.55 L-3.71 1.30 L-7.13 -2.50 L-2.29 -3.41 Z" transform="translate(10,10)" fill="none" stroke="#C6C6C6" stroke-width="2.2" stroke-linejoin="round"/></svg>
<div class="t" style="left:113.00px;top:562.15px;font-size:14px;color:#0052CC;letter-spacing:-0.179px;-webkit-text-stroke:0.3px #0052CC;">For John</div>
<div class="b" style="left:353px;top:568px;width:58px;height:20px;background:#F4F5F7;border-radius:3px;"></div>
<div class="t" style="left:357.00px;top:567.15px;font-size:14px;color:#172B4D;letter-spacing:-1.206px;">GLOBAL</div>
<div class="t" style="left:473.50px;top:568.15px;font-size:14px;color:#172B4D;letter-spacing:-0.134px;">for John by John</div>
<div class="b" style="left:598px;top:571px;width:46px;height:16px;background:#DFE1E6;border-radius:3px;"></div>
<div class="t" style="left:601.80px;top:569.08px;font-size:11.3px;color:#3D4C68;letter-spacing:0.238px;font-weight:700;">OW...</div>
<svg class="b" style="left:668px;top:562px" width="32" height="32"><use href="#av-j"/></svg>
<div class="t" style="left:722.30px;top:568.15px;font-size:14px;color:#0052CC;letter-spacing:-0.159px;-webkit-text-stroke:0.3px #0052CC;">John Snow</div>
<div class="t" style="left:830.80px;top:568.15px;font-size:14px;color:#172B4D;letter-spacing:0.115px;">1/30/2024</div>
<svg class="b" style="left:947px;top:562px" width="32" height="32"><use href="#av-j"/></svg>
<div class="t" style="left:1001.50px;top:568.15px;font-size:14px;color:#0052CC;letter-spacing:-0.096px;-webkit-text-stroke:0.3px #0052CC;">John Snow</div>
<svg class="b" style="left:1134px;top:562px" width="32" height="32"><use href="#av-d"/></svg>
<div class="t" style="left:1187.50px;top:568.15px;font-size:14px;color:#0052CC;letter-spacing:0.467px;-webkit-text-stroke:0.3px #0052CC;">admin</div>
<div class="t" style="left:1312.00px;top:568.15px;font-size:14px;color:#172B4D;letter-spacing:0.152px;">2/01/2024</div>
<div class="b" style="left:1421px;top:570px;width:18px;height:16px;background:#0052CC;border-radius:8px;"></div>
<div class="t" style="left:1426.50px;top:568.67px;font-size:12.5px;color:#fff;letter-spacing:0.000px;-webkit-text-stroke:0.3px #fff;">0</div>
<svg class="b" style="left:1511px;top:568px;" width="18" height="19" viewBox="0 0 18 19"><path d="M0.8 3 H17 V4.9 H0.8 Z M6.3 1.9 H11.6 V3 H6.3 Z" fill="#42526E"/><path d="M1.8 6 H16.2 L14.4 17.4 C14.3 17.8 14 18 13.6 18 H4.6 C4.2 18 3.9 17.8 3.8 17.4 Z" fill="#42526E"/></svg>
<div class="b" style="left:1550px;top:569px;width:4px;height:4px;background:#42526E;border-radius:2px;"></div>
<div class="b" style="left:1550px;top:576px;width:4px;height:4px;background:#42526E;border-radius:2px;"></div>
<div class="b" style="left:1550px;top:583px;width:4px;height:4px;background:#42526E;border-radius:2px;"></div>
<svg class="b" style="left:19.9px;top:625px;" width="20" height="20" viewBox="0 0 20 20"><path d="M0.00 -7.95 L2.23 -3.26 L7.13 -2.46 L3.61 1.24 L4.41 6.43 L0.00 4.03 L-4.41 6.43 L-3.61 1.24 L-7.13 -2.46 L-2.23 -3.26 Z" transform="translate(10,10)" fill="#FFAB00" stroke="#FFAB00" stroke-width="1.6" stroke-linejoin="round"/></svg>
<div class="t" style="left:113.00px;top:618.15px;font-size:14px;color:#0052CC;letter-spacing:-0.082px;-webkit-text-stroke:0.3px #0052CC;">For Bugs by John</div>
<div class="b" style="left:353px;top:624px;width:63.5px;height:20px;background:#F4F5F7;border-radius:3px;"></div>
<div class="t" style="left:357.00px;top:623.15px;font-size:14px;color:#172B4D;letter-spacing:-0.187px;">3 owners</div>
<div class="t" style="left:473.50px;top:624.15px;font-size:14px;color:#172B4D;letter-spacing:-0.134px;">for John by John</div>
<div class="b" style="left:598px;top:627px;width:46px;height:16px;background:#DFE1E6;border-radius:3px;"></div>
<div class="t" style="left:601.80px;top:625.08px;font-size:11.3px;color:#3D4C68;letter-spacing:0.238px;font-weight:700;">OW...</div>
<svg class="b" style="left:668px;top:618px" width="32" height="32"><use href="#av-j"/></svg>
<div class="t" style="left:722.30px;top:624.15px;font-size:14px;color:#0052CC;letter-spacing:-0.159px;-webkit-text-stroke:0.3px #0052CC;">John Snow</div>
<div class="t" style="left:830.80px;top:624.15px;font-size:14px;color:#172B4D;letter-spacing:0.115px;">1/30/2024</div>
<svg class="b" style="left:947px;top:618px" width="32" height="32"><use href="#av-j"/></svg>
<div class="t" style="left:1001.50px;top:624.15px;font-size:14px;color:#0052CC;letter-spacing:-0.096px;-webkit-text-stroke:0.3px #0052CC;">John Snow</div>
<svg class="b" style="left:1134px;top:618px" width="32" height="32"><use href="#av-j"/></svg>
<div class="t" style="left:1187.50px;top:624.15px;font-size:14px;color:#0052CC;letter-spacing:-0.096px;-webkit-text-stroke:0.3px #0052CC;">John Snow</div>
<div class="t" style="left:1312.00px;top:624.15px;font-size:14px;color:#172B4D;letter-spacing:0.152px;">2/01/2024</div>
<div class="b" style="left:1421px;top:626px;width:18px;height:16px;background:#0052CC;border-radius:8px;"></div>
<div class="t" style="left:1426.50px;top:624.67px;font-size:12.5px;color:#fff;letter-spacing:0.000px;-webkit-text-stroke:0.3px #fff;">1</div>
<svg class="b" style="left:1511px;top:624px;" width="18" height="19" viewBox="0 0 18 19"><path d="M0.8 3 H17 V4.9 H0.8 Z M6.3 1.9 H11.6 V3 H6.3 Z" fill="#42526E"/><path d="M1.8 6 H16.2 L14.4 17.4 C14.3 17.8 14 18 13.6 18 H4.6 C4.2 18 3.9 17.8 3.8 17.4 Z" fill="#42526E"/></svg>
<div class="b" style="left:1550px;top:625px;width:4px;height:4px;background:#42526E;border-radius:2px;"></div>
<div class="b" style="left:1550px;top:632px;width:4px;height:4px;background:#42526E;border-radius:2px;"></div>
<div class="b" style="left:1550px;top:639px;width:4px;height:4px;background:#42526E;border-radius:2px;"></div>
<div class="b" style="left:651px;top:278px;width:166px;height:380px;background:transparent;border:3px solid #E7423B;"></div>
</body></html>
